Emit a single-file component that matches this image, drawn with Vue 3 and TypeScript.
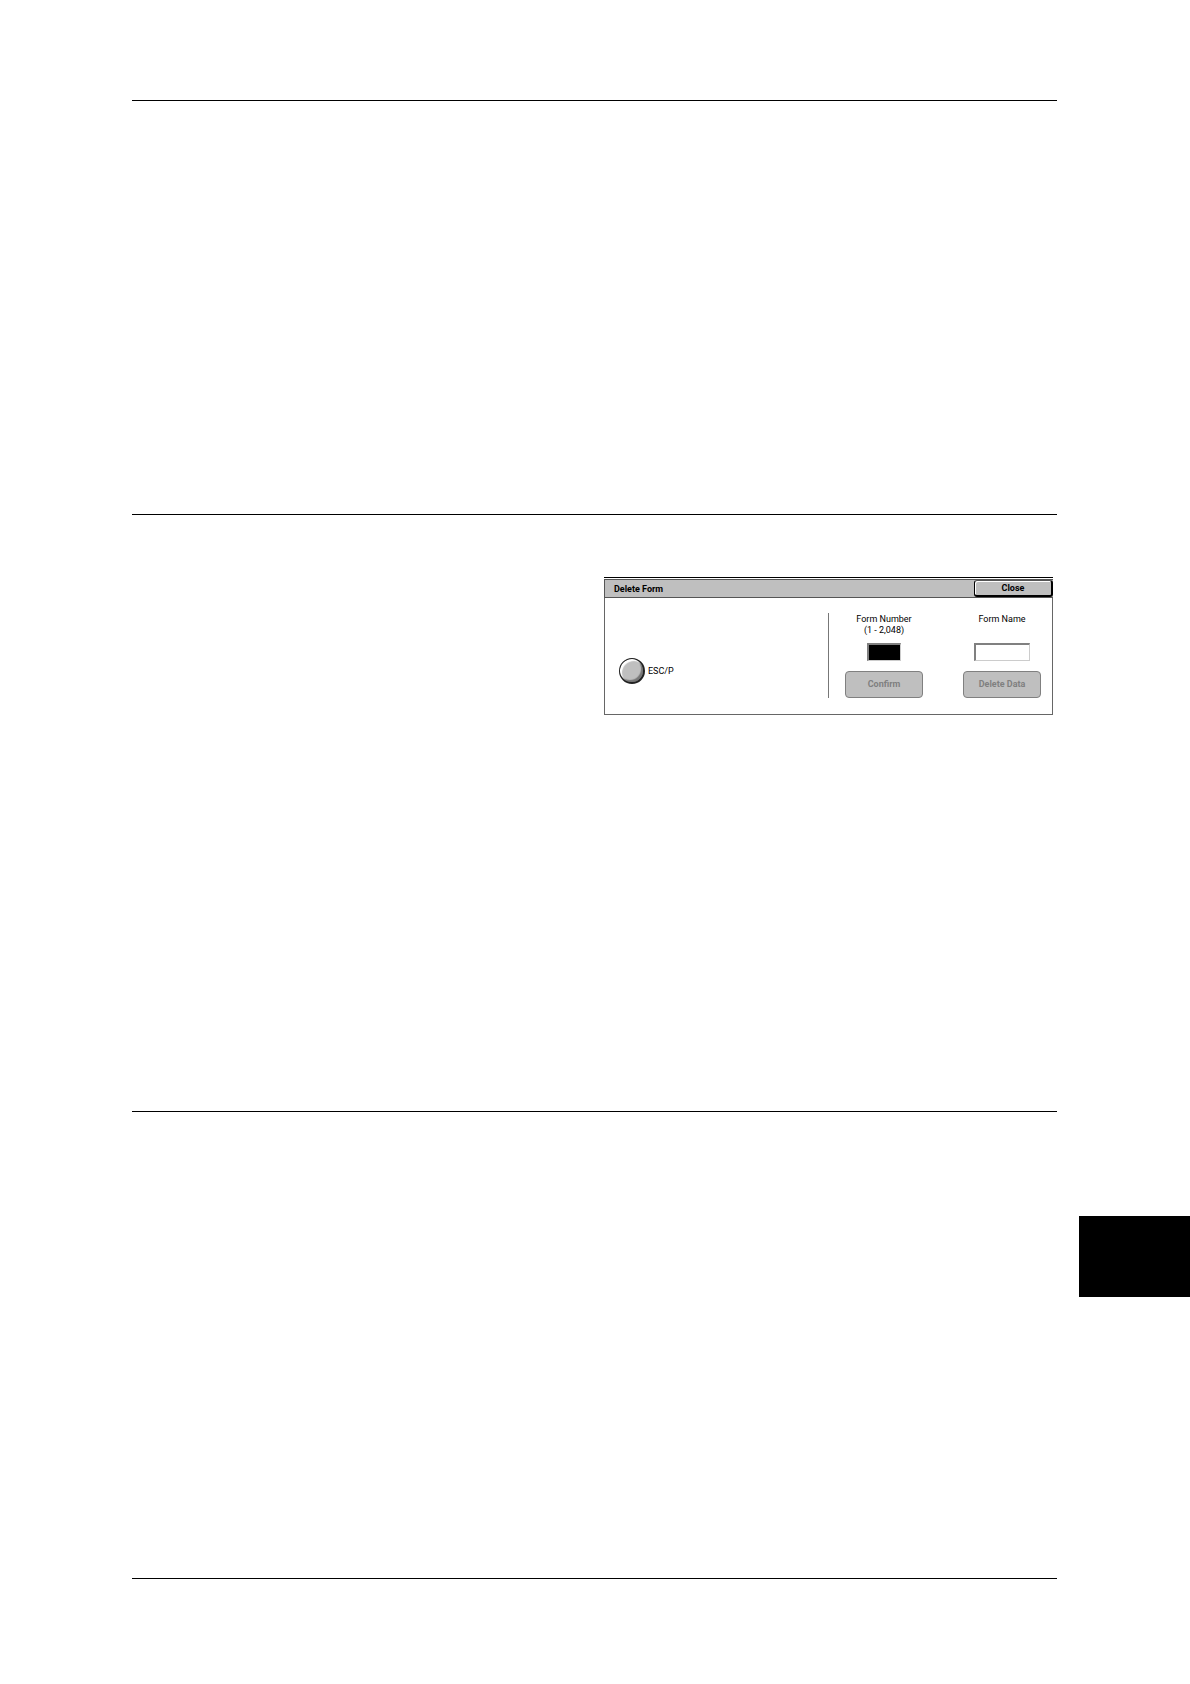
<script setup lang="ts">
import { ref } from 'vue'

const emulation = ref('')
const formNumber = ref('')
const formName = ref('')
</script>

<template>
  <div class="page">
    <main class="content">
      <section class="block intro"></section>
      <section class="block middle">
        <form class="panel" @submit.prevent>
          <header class="bar">
            <h1 class="title">Delete Form</h1>
            <button type="button" class="close">Close</button>
          </header>
          <div class="body">
            <div class="choices">
              <label class="choice">
                <input v-model="emulation" class="radio" type="radio" name="emulation" value="escp" />
                <span>ESC/P</span>
              </label>
            </div>
            <div class="fields">
              <div class="field">
                <label class="label" for="form-number">Form Number<br />(1 - 2,048)</label>
                <input id="form-number" v-model="formNumber" class="box number" type="text" />
                <button type="button" class="action" disabled>Confirm</button>
              </div>
              <div class="field">
                <label class="label" for="form-name">Form Name</label>
                <input id="form-name" v-model="formName" class="box name" type="text" />
                <button type="button" class="action" disabled>Delete Data</button>
              </div>
            </div>
          </div>
        </form>
      </section>
      <section class="block last"></section>
      <footer class="footer"></footer>
    </main>
    <aside class="side">
      <div class="tab"></div>
    </aside>
  </div>
</template>

<style>
body {
  margin: 0;
  background: #fff;
}
</style>

<style scoped>
.page {
  display: flex;
  min-height: 100vh;
  font-family: Roboto, "Liberation Sans", sans-serif;
  font-size: 9px;
  line-height: 11px;
  color: #000;
}

.page * {
  box-sizing: border-box;
}

.content {
  flex: 1;
  padding: 100px 0 0 132px;
}

.block,
.footer {
  border-top: 1px solid #000;
}

.intro {
  min-height: 414px;
}

.middle {
  display: flex;
  justify-content: flex-end;
  align-items: flex-start;
  min-height: 597px;
  padding: 62px 4px 0 0;
}

.last {
  min-height: 467px;
}

.side {
  display: flex;
  justify-content: flex-end;
  align-items: flex-start;
  width: 133px;
  padding-top: 1216px;
}

.tab {
  width: 111px;
  height: 81px;
  background: #000;
}

.panel {
  width: 449px;
  border-top: 1px solid #000;
}

.bar {
  display: flex;
  align-items: stretch;
  justify-content: space-between;
  height: 19px;
  margin-top: 1px;
  border: 1px solid #555;
  border-right: 0;
  background: #bfbfbf;
}

.title {
  margin: 0;
  padding-left: 9px;
  font-size: 9px;
  font-weight: 700;
  line-height: 18px;
}

button {
  padding: 0;
  font-family: inherit;
  font-size: 9px;
  font-weight: 700;
  line-height: 11px;
}

.close {
  width: 79px;
  border: 1px solid #000;
  border-top-color: #555;
  border-width: 1px 2px 2px 1px;
  border-radius: 3px;
  background: #bfbfbf;
  box-shadow: inset 1px 1px 0 #fff;
  color: #000;
}

.body {
  display: flex;
  padding: 15px 11px 16px 14px;
  border: 1px solid #666;
  border-top: 0;
}

.choices {
  flex: 1;
  padding-top: 45px;
  border-right: 1px solid #777;
}

.choice {
  display: flex;
  align-items: center;
  gap: 3px;
  width: max-content;
}

.radio {
  appearance: none;
  width: 26px;
  height: 26px;
  margin: 0;
  border: 2px solid #222;
  border-top-width: 1px;
  border-left-width: 1px;
  border-radius: 50%;
  background: #bfbfbf;
  box-shadow: inset 2px 2px 1px #fff, inset -2px -2px 1px #777;
}

.fields {
  display: flex;
  gap: 40px;
  padding-left: 16px;
}

.field {
  display: flex;
  flex-direction: column;
  align-items: center;
  width: 78px;
}

.label {
  height: 30px;
  padding-top: 1px;
  text-align: center;
}

.box {
  height: 18px;
  margin: 0 0 10px;
  padding: 1px 2px;
  border: 1px solid #ccc;
  border-top: 2px solid #808080;
  border-left: 2px solid #808080;
  border-radius: 0;
  background: #fff;
  font: inherit;
  outline: none;
}

.number {
  width: 34px;
  background: #000;
  color: #fff;
}

.name {
  width: 56px;
}

.action {
  width: 78px;
  height: 27px;
  border: 1px solid #808080;
  border-radius: 4px;
  background: #bfbfbf;
  color: #808080;
}
</style>
